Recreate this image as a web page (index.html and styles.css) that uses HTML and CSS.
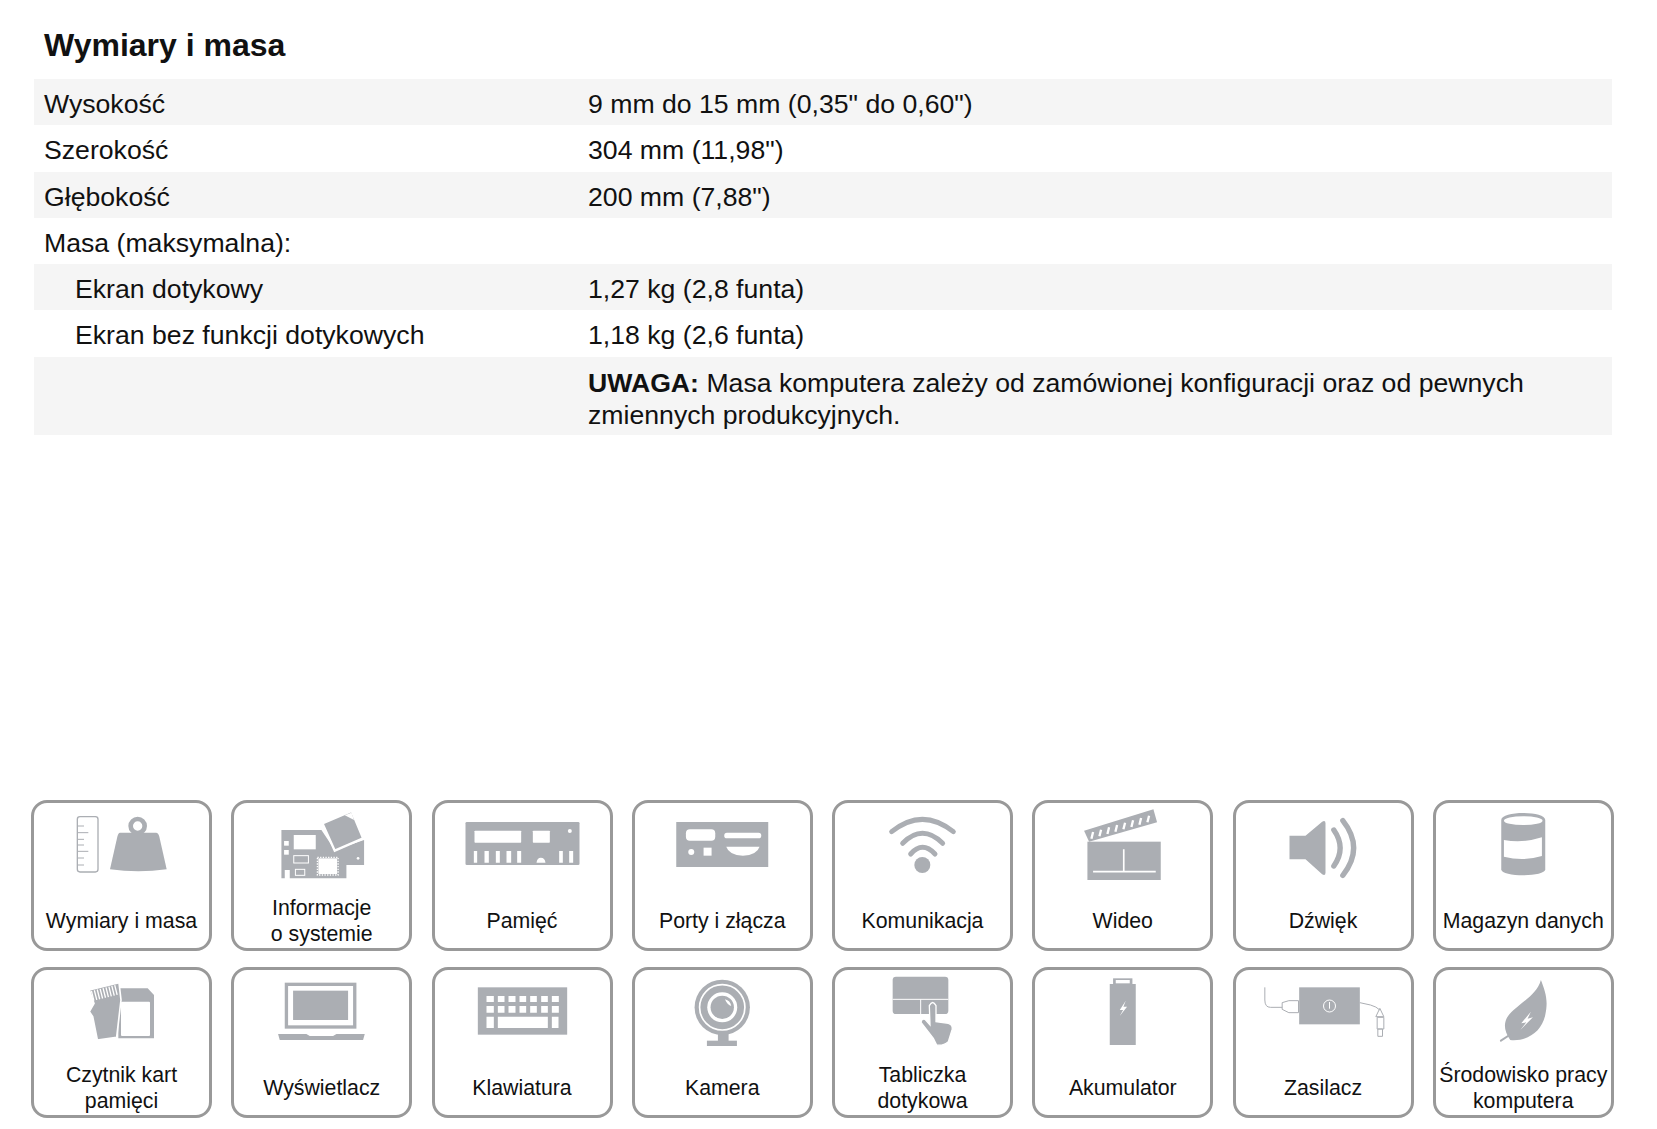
FILE: index.html
```html
<!DOCTYPE html>
<html lang="pl">
<head>
<meta charset="utf-8">
<title>Wymiary i masa</title>
<link rel="stylesheet" href="styles.css">
</head>
<body>
<main class="page">
  <h1 class="title">Wymiary i masa</h1>
  <section class="specs">
    <div class="row"><div>Wysokość</div><div>9 mm do 15 mm (0,35" do 0,60")</div></div>
    <div class="row"><div>Szerokość</div><div>304 mm (11,98")</div></div>
    <div class="row"><div>Głębokość</div><div>200 mm (7,88")</div></div>
    <div class="row"><div>Masa (maksymalna):</div><div></div></div>
    <div class="row"><div class="indent">Ekran dotykowy</div><div>1,27 kg (2,8 funta)</div></div>
    <div class="row"><div class="indent">Ekran bez funkcji dotykowych</div><div>1,18 kg (2,6 funta)</div></div>
    <div class="row note"><div></div><div><b>UWAGA:</b> Masa komputera zależy od zamówionej konfiguracji oraz od pewnych zmiennych produkcyjnych.</div></div>
  </section>
  <nav class="tiles">
    <a class="tile">
      <svg viewBox="42 39 522.75 276">
        <rect class="ln" x="172" y="80" width="62" height="166" rx="8" stroke-width="4"/>
        <path class="ln" stroke-width="3" d="M174 108H192M174 128H205M174 148H192M174 165H192M174 184H205M174 204H192M174 225H192"/>
        <circle class="ln" cx="353" cy="108" r="21" stroke-width="14"/>
        <path class="g" d="M300 128H408Q415 128 418 140L440 238Q355 250 270 238L292 140Q295 128 300 128Z"/>
      </svg>
      <span class="lab">Wymiary i masa</span>
    </a>
    <a class="tile">
      <svg viewBox="642.75 39 522.75 276">
        <path class="g" d="M785 120H905L945 180L1033 150V225H980V265H810V240H795V265H785Z"/>
        <path class="g wline" stroke-width="7" d="M908 100L996 63L1030 145L945 182Z"/>
        <path class="w" d="M975 76L995 68L1003 90Z"/>
        <rect class="w" x="822" y="135" width="66" height="43"/>
        <rect class="w" x="793" y="153" width="14" height="14"/>
        <rect class="w" x="793" y="180" width="14" height="14"/>
        <rect class="wl" x="822" y="197" width="44" height="22" stroke-width="3"/>
        <rect class="wl" x="827" y="238" width="28" height="18" stroke-width="3"/>
        <rect class="w" x="896" y="205" width="56" height="47"/>
        <rect class="wl" x="893" y="202" width="62" height="53" stroke-width="4" stroke-dasharray="4 4"/>
        <circle class="w" cx="1015" cy="205" r="4"/>
      </svg>
      <span class="lab">Informacje<br>o systemie</span>
    </a>
    <a class="tile">
      <svg viewBox="43.5 39 522.75 276">
        <rect class="g" x="135" y="96" width="342" height="129" rx="4"/>
        <rect class="w" x="162" y="122" width="140" height="36" rx="2"/>
        <rect class="w" x="337" y="122" width="51" height="36" rx="2"/>
        <circle class="w" cx="448" cy="123" r="6"/>
        <path class="w" d="M160 183H170V218H160ZM192 183H205V218H192ZM226 183H238V218H226ZM258 183H272V218H258ZM290 183H302V218H290ZM416 183H427V218H416ZM446 183H458V218H446ZM348 218Q350 203 361 203Q373 203 375 218Z"/>
      </svg>
      <span class="lab">Pamięć</span>
    </a>
    <a class="tile">
      <svg viewBox="644.25 39 522.75 276">
        <rect class="g" x="768" y="96" width="276" height="135"/>
        <rect class="w" x="797" y="118" width="88" height="34" rx="12"/>
        <rect class="w" x="912" y="128" width="111" height="17" rx="8"/>
        <circle class="w" cx="813" cy="186" r="9"/>
        <rect class="w" x="850" y="173" width="24" height="24"/>
        <path class="w" d="M918 170H1018Q1010 195 968 197Q926 195 918 170Z"/>
      </svg>
      <span class="lab">Porty i złącza</span>
    </a>
    <a class="tile">
      <svg viewBox="45 39 522.75 276">
        <circle class="g" cx="307" cy="225" r="24"/>
        <path class="ln rnd" stroke-width="15" d="M215 125Q307 51 400 125M248 160Q307 100 368 160M272 192Q307 152 345 192"/>
      </svg>
      <span class="lab">Komunikacja</span>
    </a>
    <a class="tile">
      <svg viewBox="645.75 39 522.75 276">
        <rect class="g" x="803" y="155" width="220" height="115"/>
        <path class="wl" stroke-width="5" d="M820 245H1008M912 178V245"/>
        <path class="g" d="M793 122L1001 58L1012 97L808 155Z"/>
        <path class="wl" stroke-width="7" d="M815 146L820 126M839 139L844 119M863 132L868 112M887 125L892 105M911 118L916 98M935 111L940 91M959 104L964 84M983 97L988 77"/>
      </svg>
      <span class="lab">Wideo</span>
    </a>
    <a class="tile">
      <svg viewBox="46.5 39 522.75 276">
        <path class="g" d="M207 137H255L305 95Q315 90 315 100V248Q315 258 305 253L255 208H207Z"/>
        <path class="ln rnd" stroke-width="16" d="M340 120Q378 174 340 228M367 92Q432 174 367 256"/>
      </svg>
      <span class="lab">Dźwięk</span>
    </a>
    <a class="tile">
      <svg viewBox="647.25 39 522.75 276">
        <path class="g" d="M843 90C843 62 975 62 975 90V238C975 262 843 262 843 238Z"/>
        <ellipse class="w" cx="909" cy="92" rx="58" ry="13"/>
        <path class="w" d="M851 150Q909 160 965 142V198Q909 215 851 200Z"/>
      </svg>
      <span class="lab">Magazyn danych</span>
    </a>

    <a class="tile">
      <svg viewBox="42 30 522.75 276">
        <path class="g" d="M295 85H383L402 105V235H295Z"/>
        <rect class="w" x="303" y="125" width="87" height="103" rx="3"/>
        <path class="g wline" stroke-width="5" d="M208 90L297 68L303 120L290 232L232 240L218 170L208 155L222 130Z"/>
        <path class="wl" stroke-width="30" stroke-dasharray="4 5" d="M216 108L292 89"/>
      </svg>
      <span class="lab">Czytnik kart<br>pamięci</span>
    </a>
    <a class="tile">
      <svg viewBox="642.75 30 522.75 276">
        <rect class="ln" x="800" y="73" width="205" height="128" stroke-width="10"/>
        <rect class="g" x="820" y="92" width="165" height="88"/>
        <path class="g" d="M775 222H860L870 228H940L950 222H1035L1030 240H780Z"/>
      </svg>
      <span class="lab">Wyświetlacz</span>
    </a>
    <a class="tile">
      <svg viewBox="43.5 30 522.75 276">
        <rect class="g" x="172" y="82" width="268" height="142"/>
        <path class="w" d="M198 108H220V126H198ZM232 108H252V126H232ZM264 108H285V126H264ZM297 108H317V126H297ZM329 108H349V126H329ZM362 108H382V126H362ZM394 108H415V126H394ZM198 138H220V158H198ZM232 138H252V158H232ZM264 138H285V158H264ZM297 138H317V158H297ZM329 138H349V158H329ZM362 138H382V158H362ZM394 138H415V158H394ZM198 170H220V204H198ZM232 170H382V204H232ZM394 170H414V204H394Z"/>
      </svg>
      <span class="lab">Klawiatura</span>
    </a>
    <a class="tile">
      <svg viewBox="644.25 30 522.75 276">
        <circle class="g" cx="906" cy="142" r="83"/>
        <circle class="wl" cx="906" cy="142" r="68" stroke-width="5"/>
        <circle class="w" cx="906" cy="142" r="45"/>
        <circle class="g" cx="906" cy="142" r="35"/>
        <path class="w" d="M914 118Q930 122 933 138Q922 136 914 118Z"/>
        <rect class="g" x="893" y="222" width="32" height="22"/>
        <rect class="g" x="860" y="242" width="90" height="16"/>
      </svg>
      <span class="lab">Kamera</span>
    </a>
    <a class="tile">
      <svg viewBox="45 30 522.75 276">
        <rect class="g" x="218" y="50" width="167" height="112" rx="10"/>
        <path class="wl" stroke-width="3" d="M218 118H385M302 118V162"/>
        <path class="g wline" stroke-width="4" d="M328 137Q338 118 348 137V185L385 190Q400 195 396 210L385 245Q370 258 350 255L340 235L303 187Q305 175 315 178L330 195Z"/>
      </svg>
      <span class="lab">Tabliczka<br>dotykowa</span>
    </a>
    <a class="tile">
      <svg viewBox="645.75 30 522.75 276">
        <rect class="g" x="880" y="55" width="58" height="20"/>
        <rect class="w" x="888" y="60" width="42" height="10"/>
        <rect class="g" x="870" y="72" width="78" height="183"/>
        <path class="w" d="M918 122L900 150H910L900 168L922 140H911Z"/>
      </svg>
      <span class="lab">Akumulator</span>
    </a>
    <a class="tile">
      <svg viewBox="46.5 30 522.75 276">
        <rect class="g" x="236" y="82" width="182" height="111"/>
        <circle class="wl" cx="327" cy="138" r="18" stroke-width="3"/>
        <path class="wl" stroke-width="3" d="M327 126V146"/>
        <path class="ln" stroke-width="3" d="M133 82V120Q133 142 150 142H185M185 128L205 122H234V158H205L185 148ZM418 128L450 135Q468 140 478 150"/>
        <path class="ln" stroke-width="3" d="M466 170L478 145L490 170ZM470 172H490V207H470ZM472 207H486V229H472Z"/>
      </svg>
      <span class="lab">Zasilacz</span>
    </a>
    <a class="tile">
      <svg viewBox="647.25 30 522.75 276">
        <path class="g" d="M962 60C975 95 985 120 975 165C965 215 920 245 870 240C845 205 850 175 880 150C920 115 950 100 962 60Z"/>
        <path class="ln rnd" stroke-width="6" d="M842 242L868 225"/>
        <path class="w" d="M932 155L903 190L918 187L900 210L938 172L922 176Z"/>
      </svg>
      <span class="lab">Środowisko pracy<br>komputera</span>
    </a>
  </nav>
</main>
</body>
</html>
```

FILE: styles.css
```css
* { box-sizing: border-box; }
html, body { margin: 0; background: #fff; }
body { font-family: "Liberation Sans", Arial, sans-serif; color: #111; }
.page { width: 1657px; height: 1129px; padding: 24px 44px 0 31px; }
.title { margin: 0 0 13px 13px; font-size: 32px; line-height: 42px; font-weight: 700; }
.specs { margin: 0 1px 0 3px; font-size: 26.65px; line-height: 32px; }
.row { display: grid; grid-template-columns: 544px 1fr; min-height: 46.3px; padding: 9px 16px 5px 10px; }
.row:nth-child(odd) { background: #f5f5f5; }
.note { height: 78px; padding-top: 10px; }
.indent { padding-left: 31px; }
.tiles { display: grid; grid-template-columns: repeat(8, 181px); grid-auto-rows: 151px; column-gap: 19.25px; row-gap: 16px; margin-top: 365px; }
.tile { display: flex; flex-direction: column; border: 3px solid #999; border-radius: 16px; overflow: hidden; }
.tile svg { display: block; width: 174.25px; height: 92px; flex: none; }
.lab { display: flex; align-items: center; justify-content: center; height: 53px; text-align: center; font-size: 21.3px; line-height: 26.5px; white-space: nowrap; }
.g { fill: #abaeb3; }
.w { fill: #fff; }
.ln { fill: none; stroke: #abaeb3; }
.rnd { stroke-linecap: round; }
.wl { fill: none; stroke: #fff; }
.wline { stroke: #fff; }
```
